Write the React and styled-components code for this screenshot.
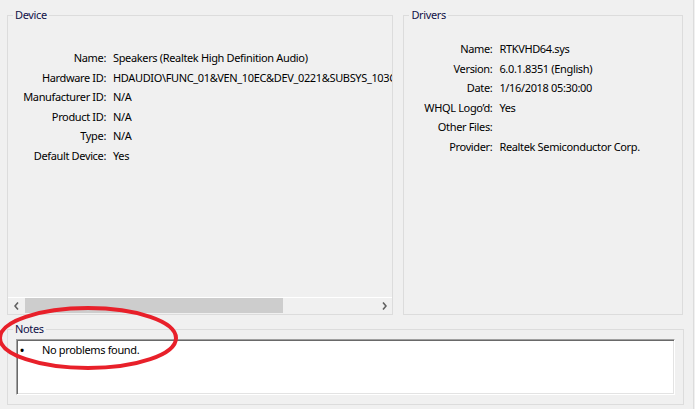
import React from "react";
import styled, { createGlobalStyle } from "styled-components";

const Global = createGlobalStyle`
  html, body { margin: 0; padding: 0; background: #f0f0f0; }
  body { width: 695px; height: 409px; overflow: hidden; }
  * { box-sizing: border-box; }
`;

const Page = styled.div`
  position: relative;
  width: 694px;
  height: 409px;
  border-right: 1px solid #dcdcdc;
  padding: 7px 10px 0 7px;
  display: flex;
  flex-direction: column;
  gap: 6px;
  font-family: "Noto Sans", "Open Sans", sans-serif;
  font-size: 11px;
  letter-spacing: -0.35px;
  color: #000;
`;

const TopRow = styled.div`
  display: flex;
  gap: 10px;
  height: 308px;
`;

const Group = styled.fieldset`
  margin: 0;
  min-width: 0;
  border: 1px solid #dcdcdc;
  border-radius: 0;
  padding: 0;
  width: ${(p) => p.$w};
  height: ${(p) => p.$h};
  display: flex;
  flex-direction: column;
`;

const Title = styled.legend`
  margin-left: 5px;
  padding: 0 2px;
  line-height: 16px;
  color: #101048;
`;

const Rows = styled.div`
  flex: 1;
  overflow: hidden;
  display: grid;
  grid-template-columns: ${(p) => p.$label}px max-content;
  grid-auto-rows: 19.6px;
  align-content: start;
  column-gap: 7px;
  padding-top: ${(p) => p.$top}px;
  white-space: nowrap;
  line-height: 19.6px;
`;

const Label = styled.span`
  text-align: right;
`;

const Value = styled.span``;

const HScroll = styled.div`
  height: 17px;
  border-top: 1px solid #ffffff;
  display: flex;
  align-items: stretch;
  background: #f0f0f0;
`;

const Arrow = styled.div`
  width: 16px;
  display: flex;
  align-items: center;
  justify-content: center;
`;

const Track = styled.div`
  flex: 1;
  display: flex;
  padding: 0 0 1px 1px;
`;

const Thumb = styled.div`
  width: 258px;
  background: #cdcdcd;
`;

const NotesBox = styled.div`
  margin: 2px 0 0 8px;
  width: 659px;
  height: 56px;
  background: #fff;
  border: 1px solid;
  border-color: #a0a0a0 #ffffff #ffffff #a0a0a0;
  box-shadow: inset 1px 1px 0 #696969, inset -1px -1px 0 #e3e3e3;
  padding: 2px 0 0 3px;
  display: flex;
  align-items: flex-start;
  line-height: 16px;
`;

const Bullet = styled.span`
  width: 22px;
  font-weight: bold;
`;

const Annotation = styled.svg`
  position: absolute;
  left: 0;
  top: 0;
  pointer-events: none;
`;

const Chevron = ({ dir }) => (
  <svg width="5" height="8" viewBox="0 0 5 8">
    <path
      d={dir === "left" ? "M4 0.5 L1 4 L4 7.5" : "M1 0.5 L4 4 L1 7.5"}
      fill="none"
      stroke="#606060"
      strokeWidth="1.6"
    />
  </svg>
);

const device = [
  ["Name:", "Speakers (Realtek High Definition Audio)"],
  ["Hardware ID:", "HDAUDIO\\FUNC_01&VEN_10EC&DEV_0221&SUBSYS_103C83E5"],
  ["Manufacturer ID:", "N/A"],
  ["Product ID:", "N/A"],
  ["Type:", "N/A"],
  ["Default Device:", "Yes"],
];

const drivers = [
  ["Name:", "RTKVHD64.sys"],
  ["Version:", "6.0.1.8351 (English)"],
  ["Date:", "1/16/2018 05:30:00"],
  ["WHQL Logo\u2019d:", "Yes"],
  ["Other Files:", ""],
  ["Provider:", "Realtek Semiconductor Corp."],
];

export default function App() {
  return (
    <>
      <Global />
      <Page>
        <TopRow>
          <Group $w="387px" $h="308px">
            <Title>Device</Title>
            <Rows $label={98} $top={25}>
              {device.map(([l, v]) => (
                <React.Fragment key={l}>
                  <Label>{l}</Label>
                  <Value>{v}</Value>
                </React.Fragment>
              ))}
            </Rows>
            <HScroll>
              <Arrow><Chevron dir="left" /></Arrow>
              <Track><Thumb /></Track>
              <Arrow><Chevron dir="right" /></Arrow>
            </HScroll>
          </Group>
          <Group $w="280px" $h="308px">
            <Title>Drivers</Title>
            <Rows $label={88} $top={16}>
              {drivers.map(([l, v]) => (
                <React.Fragment key={l}>
                  <Label>{l}</Label>
                  <Value>{v}</Value>
                </React.Fragment>
              ))}
            </Rows>
          </Group>
        </TopRow>
        <Group $w="677px" $h="84px">
          <Title>Notes</Title>
          <NotesBox>
            <Bullet>•</Bullet>
            <span>No problems found.</span>
          </NotesBox>
        </Group>
        <Annotation width="695" height="409" viewBox="0 0 695 409">
          <ellipse cx="88" cy="338" rx="88" ry="30" fill="none" stroke="#e8202a" strokeWidth="4" />
        </Annotation>
      </Page>
    </>
  );
}
